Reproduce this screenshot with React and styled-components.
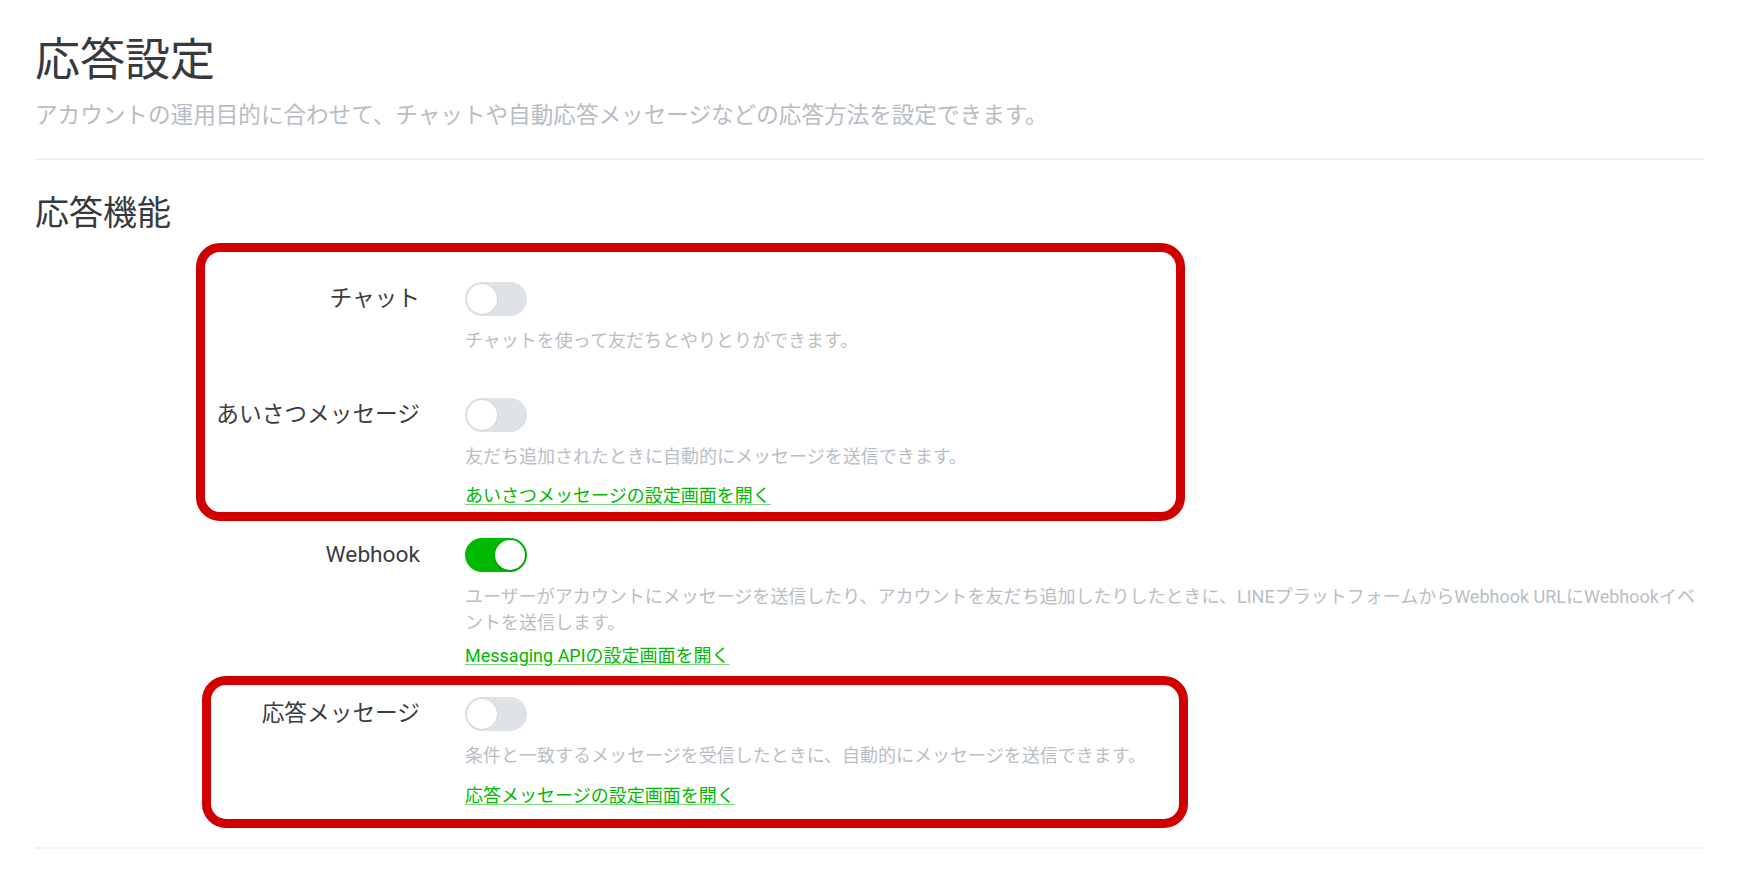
import React from 'react'
import styled, { createGlobalStyle, css } from 'styled-components'

const GlobalStyle = createGlobalStyle`
  body {
    margin: 0;
    background: #fff;
    font-family: Roboto, "Noto Sans CJK JP", sans-serif;
  }
`

const Page = styled.div`
  padding: 35px 33px 0 35px;
`

const Header = styled.header`
  padding-bottom: 27px;
  border-bottom: 2px solid #f0f0f0;
`

const Title = styled.h1`
  margin: 0;
  font-size: 45px;
  line-height: 52px;
  font-weight: 400;
  color: #363a3f;
`

const Lead = styled.p`
  margin: 14px 0 0;
  font-size: 22.6px;
  line-height: 30px;
  color: #b7bcc4;
`

const Section = styled.section`
  padding-bottom: 38px;
  border-bottom: 2px solid #f0f0f0;
`

const SectionTitle = styled.h2`
  margin: 31px 0 47px;
  font-size: 34px;
  line-height: 44px;
  font-weight: 400;
  color: #363a3f;
`

const Highlight = styled.div`
  position: relative;
  &::after {
    content: '';
    position: absolute;
    top: -${p => p.$top}px;
    bottom: -${p => p.$bottom}px;
    left: ${p => p.$left}px;
    width: ${p => p.$width}px;
    box-sizing: border-box;
    border: 9px solid #d10000;
    border-radius: 24px;
    pointer-events: none;
  }
`

const Row = styled.div`
  display: grid;
  grid-template-columns: 385px 1fr;
  column-gap: 45px;
  margin-top: ${p => p.$gap || 0}px;
  margin-bottom: ${p => (p.$last ? 0 : 44)}px;
`

const Label = styled.div`
  text-align: right;
  font-size: 22.7px;
  line-height: 34px;
  color: #3a3d42;
`

const Body = styled.div`
  display: flex;
  flex-direction: column;
  align-items: flex-start;
`

const Track = styled.button`
  position: relative;
  width: 62px;
  height: 34px;
  padding: 0;
  border: none;
  border-radius: 17px;
  background: ${p => (p.$on ? '#00b900' : '#dfe2e6')};
  cursor: pointer;

  &::after {
    content: '';
    position: absolute;
    top: 2px;
    left: ${p => (p.$on ? '30px' : '2px')};
    width: 30px;
    height: 30px;
    border-radius: 50%;
    background: #fff;
    ${p =>
      p.$on
        ? css`box-shadow: 0 1px 3px rgba(0, 0, 0, 0.25);`
        : css`box-shadow: 0 0 0 1px #d4d8dd;`}
  }
`

const Desc = styled.p`
  margin: 12px 0 0;
  font-size: 18px;
  line-height: 26px;
  color: #b9bec6;
`

const SettingLink = styled.a`
  margin-top: ${p => p.$space}px;
  font-size: 18px;
  line-height: 27px;
  color: #00b900;
  text-decoration: underline;
  text-decoration-color: #7ad97a;
  text-underline-offset: 2px;
`

const Setting = ({ label, on, desc, link, linkSpace = 12, gap, last }) => (
  <Row $gap={gap} $last={last}>
    <Label>{label}</Label>
    <Body>
      <Track $on={on} aria-pressed={!!on} />
      <Desc>{desc}</Desc>
      {link && (
        <SettingLink href="#" $space={linkSpace}>
          {link}
        </SettingLink>
      )}
    </Body>
  </Row>
)

const App = () => (
  <Page>
    <GlobalStyle />
    <Header>
      <Title>応答設定</Title>
      <Lead>
        アカウントの運用目的に合わせて、チャットや自動応答メッセージなどの応答方法を設定できます。
      </Lead>
    </Header>

    <Section>
      <SectionTitle>応答機能</SectionTitle>

      <Highlight $top={39} $bottom={12} $left={161} $width={989}>
        <Setting label="チャット" desc="チャットを使って友だちとやりとりができます。" />
        <Setting
          label="あいさつメッセージ"
          desc="友だち追加されたときに自動的にメッセージを送信できます。"
          link="あいさつメッセージの設定画面を開く"
          linkSpace={12}
          last
        />
      </Highlight>

      <Setting
        label="Webhook"
        on
        gap={29}
        desc="ユーザーがアカウントにメッセージを送信したり、アカウントを友だち追加したりしたときに、LINEプラットフォームからWebhook URLにWebhookイベントを送信します。"
        link="Messaging APIの設定画面を開く"
        linkSpace={6}
        last
      />

      <Highlight $top={21} $bottom={19} $left={167} $width={986}>
        <Setting
          label="応答メッセージ"
          gap={28}
          desc="条件と一致するメッセージを受信したときに、自動的にメッセージを送信できます。"
          link="応答メッセージの設定画面を開く"
          linkSpace={13}
          last
        />
      </Highlight>
    </Section>
  </Page>
)

export default App
